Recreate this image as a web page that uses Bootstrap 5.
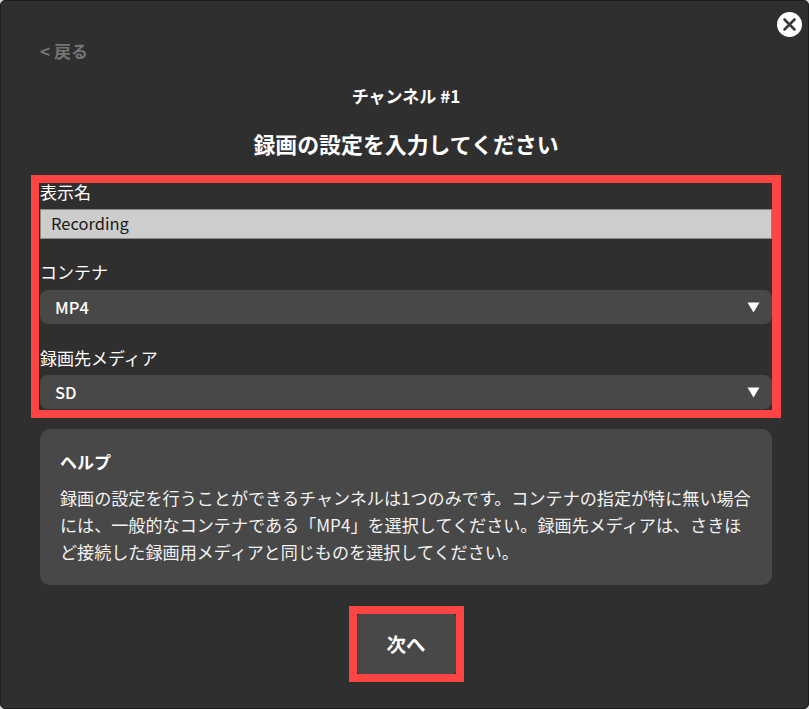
<!DOCTYPE html>
<html lang="ja">
<head>
<meta charset="utf-8">
<title>録画の設定</title>
<link href="https://cdn.jsdelivr.net/npm/bootstrap@5.3.0/dist/css/bootstrap.min.css" rel="stylesheet">
<style>
html,body{height:100%;}
body{background:#d8d8d8;font-family:"Noto Sans CJK JP","Noto Sans",sans-serif;overflow:hidden;}
.shell{width:809px;height:709px;background:#2f2f2f;border:1px solid #1c1c1c;border-radius:5px;padding:0 36px 0 39px;color:#fff;}
.closer{top:11px;right:6px;width:25px;height:25px;background:#fff;border:0;padding:0;}
.backlink{margin-top:40px;height:21px;font-size:17px;line-height:20px;font-weight:700;color:#757575;text-decoration:none;}
.chan{margin:22px 0 0;height:24px;font-size:17px;line-height:24px;font-weight:700;}
.heading{margin:20px 0 0;height:32px;font-size:21.9px;line-height:32px;font-weight:700;}
.redbox{border:8px solid #ff4444;}
.outerbox{margin:15px -9px 0 -9px;border-right-width:9px;padding:0 0 1px 1px;}
.fieldlabel{font-size:17px;line-height:20px;margin:0;color:#fff;}
.l1{line-height:18px;}
.txt{height:30px;background:#cdcdcd;border:1px solid #8a8a8a;border-radius:0;font-size:16.5px;line-height:24px;color:#1a1a1a;padding:0 10px 2px;margin-top:8px;}
.txt:focus{background:#cdcdcd;color:#1a1a1a;box-shadow:none;border-color:#8a8a8a;}
.sel{height:34px;background:#484848;border-radius:8px;padding:0 12px 0 15px;font-size:16.5px;font-weight:500;color:#fff;}
.l2{margin-top:23px;margin-bottom:8px;}
.l3{margin-top:24px;margin-bottom:7px;}
.helpbox{margin-top:11px;height:156px;background:#484848;border-radius:10px;padding:21px 20px 0;}
.helpttl{font-size:17px;line-height:24px;font-weight:700;margin:0 0 10px;}
.helptxt{font-size:17.1px;line-height:27px;margin:0;white-space:nowrap;color:#f2f2f2;}
.nextwrap{margin-top:21px;width:115px;height:76px;}
.nextbtn{width:100%;height:100%;background:#484848;border:0;border-radius:4px;color:#fff;font-weight:700;font-size:19.5px;padding:0;}
.nextbtn:hover{background:#484848;color:#fff;}
</style>
</head>
<body>
<div class="shell position-relative">
  <button class="closer position-absolute rounded-circle d-flex align-items-center justify-content-center" aria-label="閉じる">
    <svg width="15" height="15" viewBox="0 0 15 15"><path d="M2.5 2.5 12.5 12.5M12.5 2.5 2.5 12.5" stroke="#3a3a3a" stroke-width="2.6" stroke-linecap="round"/></svg>
  </button>
  <a href="#" class="backlink d-block">&lt; 戻る</a>
  <p class="chan text-center">チャンネル #1</p>
  <h1 class="heading text-center">録画の設定を入力してください</h1>
  <form class="redbox outerbox d-block" onsubmit="return false">
    <label class="fieldlabel l1 d-block" for="nm">表示名</label>
    <input id="nm" class="form-control txt" value="Recording">
    <div class="fieldlabel l2">コンテナ</div>
    <div class="sel d-flex align-items-center justify-content-between">
      <span>MP4</span>
      <svg width="13" height="11" viewBox="0 0 13 11"><path d="M0.5 0.5H12.5L6.5 10.5Z" fill="#fff"/></svg>
    </div>
    <div class="fieldlabel l3">録画先メディア</div>
    <div class="sel d-flex align-items-center justify-content-between">
      <span>SD</span>
      <svg width="13" height="11" viewBox="0 0 13 11"><path d="M0.5 0.5H12.5L6.5 10.5Z" fill="#fff"/></svg>
    </div>
  </form>
  <div class="helpbox">
    <h2 class="helpttl">ヘルプ</h2>
    <p class="helptxt">録画の設定を行うことができるチャンネルは1つのみです。コンテナの指定が特に無い場合<br>には、一般的なコンテナである「MP4」を選択してください。録画先メディアは、さきほ<br>ど接続した録画用メディアと同じものを選択してください。</p>
  </div>
  <div class="redbox nextwrap mx-auto">
    <button class="btn nextbtn">次へ</button>
  </div>
</div>
<script src="https://cdn.jsdelivr.net/npm/bootstrap@5.3.0/dist/js/bootstrap.bundle.min.js"></script>
</body>
</html>
